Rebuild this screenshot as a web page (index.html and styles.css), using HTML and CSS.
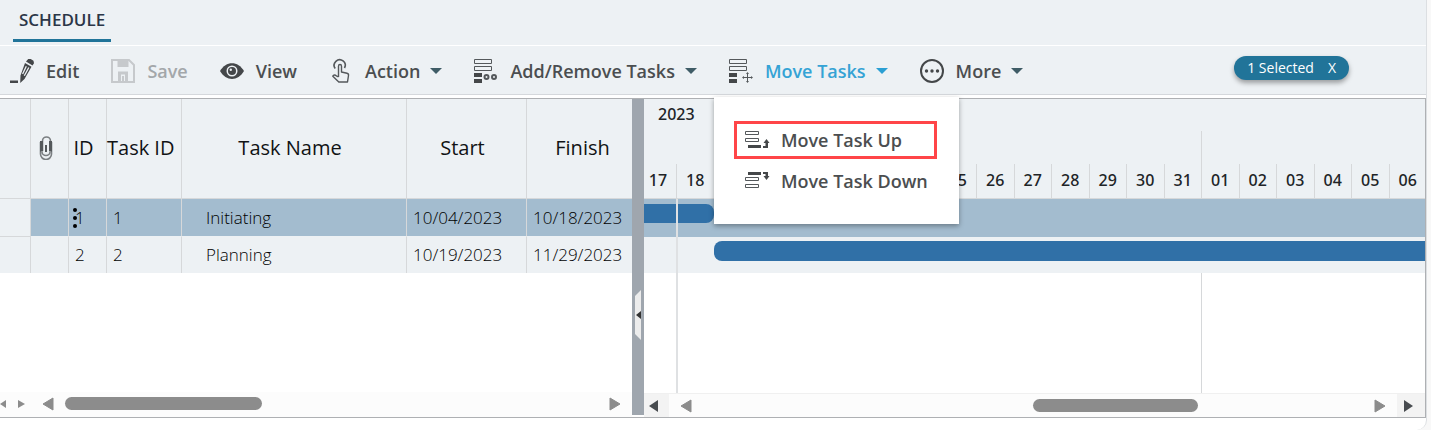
FILE: index.html
```
<!DOCTYPE html>
<html lang="en">
<head>
<meta charset="utf-8">
<title>Schedule</title>
<link rel="stylesheet" href="styles.css">
</head>
<body>
<main class="panel">
  <nav class="tabs"><a class="tab" href="#schedule">SCHEDULE</a></nav>

  <div class="toolbar">
    <button class="tool" type="button">
      <svg class="icon" viewBox="0 0 24 24"><path fill="#444749" d="M0 21.500h8v2.500H0zM16 2.500 18.200 0h2.500l2.800 1.800.5 2.500-1.500 2.200zM15 4l6.500 3.800-7 12.200L10.200 24l.3-7.500z"/><path stroke="#edf1f4" stroke-width="1.300" d="m16.300 7.200-3.700 7.800M18.800 8.500l-4.500 8.300"/></svg>
      <span>Edit</span>
    </button>
    <button class="tool tool-off" type="button" disabled>
      <svg class="icon" viewBox="0 0 24 24" fill="none" stroke="#c6c9cc"><path stroke-width="2" d="M1 1h17l5 5v17H1z"/><path fill="#c6c9cc" stroke="none" d="M6.500 2h11v6h-11z"/><path stroke-width="3" d="M8.500 23v-9h7v9"/><path stroke-width="2" d="M12 17v6"/></svg>
      <span>Save</span>
    </button>
    <button class="tool" type="button">
      <svg class="icon" viewBox="0 0 24 24"><path fill="#444749" d="M0 12C6 1.500 18 1.500 24 12 18 22.500 6 22.500 0 12z"/><circle cx="12" cy="12" r="5.500" fill="#edf1f4"/><circle cx="12" cy="12" r="4" fill="#444749"/><circle cx="10.800" cy="10.800" r="1.200" fill="#edf1f4"/></svg>
      <span>View</span>
    </button>
    <button class="tool" type="button">
      <svg class="icon" viewBox="0 0 24 24" fill="none" stroke="#54585b" stroke-width="1.400"><path d="M6.200 9.500A5.500 5.500 0 1 1 15.500 9" stroke-width="1.600"/><path stroke-linejoin="round" d="M9.500 18V7.200c0-2.200 3-2.200 3 0V13l5.500 1.300c1.300.3 1.700 1 1.500 2.200L18.500 23H9.800l-6-5.800c.8-1.500 2.300-1.400 3.500-.4L9.500 18"/></svg>
      <span>Action</span>
      <svg class="caret" viewBox="0 0 12 6"><path d="M0 0h12L6 6z"/></svg>
    </button>
    <button class="tool" type="button">
      <svg class="icon" viewBox="0 0 24 24" fill="none" stroke="#54585b"><path d="M.5.500h17v4H.5zM.5 7.500h17v4H.5z"/><path fill="#444749" stroke="none" d="M0 14h8v4H0zM0 20h8v4H0z"/><circle cx="12.500" cy="18" r="2" stroke-width="2"/><circle cx="20" cy="18" r="2" stroke-width="2"/></svg>
      <span>Add/Remove Tasks</span>
      <svg class="caret" viewBox="0 0 12 6"><path d="M0 0h12L6 6z"/></svg>
    </button>
    <div class="menu-anchor">
      <button class="tool tool-open" type="button" aria-expanded="true">
        <svg class="icon" viewBox="0 0 24 24" fill="none" stroke="#54585b"><path d="M.5.500h17v4H.5zM.5 7.500h17v4H.5z"/><path fill="#444749" stroke="none" d="M0 14h8v4H0zM0 20h8v4H0z"/><path d="M18.500 14v9M14 18.500h9"/><path fill="#54585b" stroke="none" d="m18.500 13 1.500 2h-3zM18.500 24l1.500-2h-3zM13 18.500l2-1.500v3zM24 18.500l-2-1.500v3z"/></svg>
        <span>Move Tasks</span>
        <svg class="caret" viewBox="0 0 12 6"><path d="M0 0h12L6 6z"/></svg>
      </button>
      <div class="menu">
        <button class="menu-item menu-item-marked" type="button">
          <svg class="icon" viewBox="0 0 24 24" fill="none" stroke="#54585b"><path d="M.5 3.500h13v3H.5zM.5 10.500h13v3H.5z"/><path fill="#444749" stroke="none" d="M3 17h13v3H3zM18 18h2.500v-3H18.500l3-4 3 4H23v5h-5z"/></svg>
          <span>Move Task Up</span>
        </button>
        <button class="menu-item" type="button">
          <svg class="icon" viewBox="0 0 24 24" fill="none" stroke="#54585b"><path d="M.5 8.500h13v3H.5zM.5 15.500h13v3H.5z"/><path fill="#444749" stroke="none" d="M3 3h13v3H3zM18 3h5v4h1.500l-3 4-3-4h2V5H18z"/></svg>
          <span>Move Task Down</span>
        </button>
      </div>
    </div>
    <button class="tool" type="button">
      <svg class="icon" viewBox="0 0 24 24" fill="none" stroke="#444749"><circle cx="12" cy="12" r="11" stroke-width="2"/><g fill="#444749" stroke="none"><circle cx="6.500" cy="12" r="1.700"/><circle cx="12" cy="12" r="1.700"/><circle cx="17.500" cy="12" r="1.700"/></g></svg>
      <span>More</span>
      <svg class="caret" viewBox="0 0 12 6"><path d="M0 0h12L6 6z"/></svg>
    </button>
    <button class="badge" type="button"><span>1 Selected</span><span>X</span></button>
  </div>

  <section class="gantt">
    <div class="grid-pane">
      <table class="grid">
        <colgroup><col class="c-mark"><col class="c-clip"><col class="c-id"><col class="c-task"><col class="c-name"><col class="c-start"><col class="c-end"></colgroup>
        <thead>
          <tr>
            <th></th>
            <th><svg class="clip" viewBox="0 0 14 24" fill="none" stroke="#7b7f82" stroke-width="1.600"><path d="M1.500 6v12a5.500 5.500 0 0 0 11 0V6M3.500 15V5a4 4 0 0 1 8 0"/><path d="M3 16a4 3.500 0 0 0 8 0"/><path stroke="#54585b" stroke-width="3" d="M2.500 5v10.500M11.500 5v10.500"/><path stroke="#54585b" stroke-width="2" d="M7 9v7"/></svg></th>
            <th>ID</th><th>Task ID</th><th>Task Name</th><th>Start</th><th>Finish</th>
          </tr>
        </thead>
        <tbody>
          <tr class="picked"><td></td><td></td><td class="grip-cell">1<svg class="grip" viewBox="0 0 4 20"><circle cx="2" cy="2" r="2"/><circle cx="2" cy="10" r="2"/><circle cx="2" cy="18" r="2"/></svg></td><td>1</td><td class="name">Initiating</td><td>10/04/2023</td><td>10/18/2023</td></tr>
          <tr><td></td><td></td><td>2</td><td>2</td><td class="name">Planning</td><td>10/19/2023</td><td>11/29/2023</td></tr>
        </tbody>
      </table>
      <div class="scroll">
        <div class="scroll-mini"><svg class="mini" viewBox="0 0 7 10"><path d="M6 1v8L0 5z"/></svg><svg class="mini" viewBox="0 0 7 10"><path d="M0 1v8l7-4z"/></svg></div>
        <svg class="arrow" viewBox="0 0 12 14"><path d="M11 1v12L1 7z"/></svg>
        <div class="track"><div class="thumb thumb-left"></div></div>
        <svg class="arrow" viewBox="0 0 12 14"><path d="M1 1v12l10-6z"/></svg>
      </div>
    </div>

    <div class="splitter"><svg class="handle" viewBox="0 0 6 50"><path fill="#ececec" d="M6 0v50L0 44V6z"/><path fill="#333" d="M6 21v8l-5-4z"/></svg></div>

    <div class="chart-pane">
      <div class="chart">
        <div class="scale">
          <div class="year">2023</div>
          <div class="slots weeks"><i class="week"></i></div>
          <div class="slots days">
            <span class="first">17</span><span>18</span><span></span><span></span><span></span><span></span><span></span><span></span><span>25</span><span>26</span><span>27</span><span>28</span><span>29</span><span>30</span><span>31</span><span>01</span><span>02</span><span>03</span><span>04</span><span>05</span><span>06</span>
          </div>
        </div>
        <div class="slots row picked-row"><div class="today"></div><div class="bar bar-a"></div></div>
        <div class="slots row"><div class="today"></div><div class="bar bar-b"></div></div>
        <div class="slots blank"><div class="today"></div><div class="week"></div></div>
      </div>
      <div class="scroll scroll-chart">
        <button class="step" type="button" aria-label="Back"><svg class="arrow-dark" viewBox="0 0 10 12"><path d="M9 0v12L0 6z"/></svg></button>
        <svg class="arrow" viewBox="0 0 12 14"><path d="M11 1v12L1 7z"/></svg>
        <div class="track"><div class="thumb thumb-right"></div></div>
        <svg class="arrow" viewBox="0 0 12 14"><path d="M1 1v12l10-6z"/></svg>
        <button class="step step-end" type="button" aria-label="Forward"><svg class="arrow-dark" viewBox="0 0 10 12"><path d="M0 0v12l9-6z"/></svg></button>
      </div>
    </div>
  </section>
</main>
</body>
</html>
```
FILE: styles.css
```
* { box-sizing: border-box; }
html, body { height: 100%; }
body {
  margin: 0;
  background: #f8f8f8;
  color: #212427;
  font-family: "Open Sans", "Noto Sans", sans-serif;
  overflow: hidden;
}
button { margin: 0; padding: 0; border: 0; background: none; color: inherit; font: inherit; }
svg { display: block; flex: none; }

.panel {
  display: flex;
  flex-direction: column;
  height: 100%;
  margin-right: 4px;
  padding-bottom: 12px;
  background: #fff;
  border-right: 1px solid #dcdfe2;
  border-bottom-right-radius: 10px;
}

/* Tabs */
.tabs {
  display: flex;
  align-items: flex-start;
  height: 46px;
  padding-left: 13px;
  background: #edf1f4;
  border-bottom: 1px solid #fff;
}
.tab {
  height: 42px;
  padding: 0 6px;
  border-bottom: 3px solid #217499;
  color: #2b3647;
  font-size: 17px;
  font-weight: 600;
  line-height: 40px;
  text-decoration: none;
}

/* Toolbar */
.toolbar {
  display: flex;
  align-items: center;
  gap: 32px;
  height: 49px;
  padding: 2px 77px 0 10px;
  background: #edf1f4;
  border-bottom: 1px solid #d5d8dc;
}
.tool {
  display: flex;
  align-items: center;
  height: 46px;
  color: #4b4e50;
  font-size: 18px;
  font-weight: 600;
  white-space: nowrap;
}
.tool-off { color: #a3a7aa; }
.tool-open { color: #35a3d5; }
.icon { width: 24px; height: 24px; margin-right: 12px; overflow: visible; }
.caret { width: 12px; height: 6px; margin-left: 10px; fill: #3f5c66; }
.tool-open .caret { fill: #2b9fd3; }
.badge {
  display: flex;
  gap: 14px;
  margin-left: auto;
  margin-bottom: 6px;
  padding: 0 13px;
  border-radius: 12px;
  background: #217499;
  box-shadow: 0 3px 5px rgba(0, 0, 0, .35);
  color: #fff;
  font-size: 14px;
  line-height: 24px;
}

/* Drop-down menu */
.menu-anchor { position: relative; }
.menu {
  position: absolute;
  top: 49px;
  left: -15px;
  z-index: 2;
  display: flex;
  flex-direction: column;
  gap: 3px;
  width: 245px;
  padding: 24px 20px;
  background: #fff;
  box-shadow: 0 2px 5px rgba(0, 0, 0, .35);
}
.menu-item {
  display: flex;
  align-items: center;
  height: 38px;
  padding-left: 8px;
  border: 3px solid transparent;
  color: #4b4e50;
  font-size: 18px;
  font-weight: 600;
  white-space: nowrap;
}
.menu-item-marked { align-self: stretch; margin-right: 2px; border-color: #ff4548; }

/* Gantt */
.gantt {
  display: flex;
  flex: 1;
  min-height: 0;
  margin-top: 3px;
  border: solid #aeb0b3;
  border-width: 1px 1px 1px 0;
}
.grid-pane { display: flex; flex-direction: column; justify-content: space-between; flex: 0 0 632px; overflow: hidden; }
.grid { width: 647px; table-layout: fixed; border-collapse: separate; border-spacing: 0; }
.c-mark { width: 31px; }
.c-clip, .c-id { width: 38px; }
.c-task { width: 75px; }
.c-name { width: 225px; }
.c-start { width: 120px; }
.grid th {
  height: 100px;
  padding: 0 8px 2px 0;
  background: #edf1f4;
  border-right: 1px solid #d6d8da;
  border-bottom: 1px solid #d6d8da;
  color: #111315;
  font-size: 20px;
  font-weight: 400;
  line-height: 28px;
  white-space: nowrap;
}
.grid td {
  height: 36px;
  padding: 0 6px;
  background: #edf1f4;
  border-right: 1px solid #d6d8da;
  color: #000;
  font-size: 17px;
  font-weight: 300;
  line-height: 24px;
  white-space: nowrap;
}
.grid .picked td { height: 38px; border-bottom: 1px solid #edf1f4; background: #a3bccf; }
.grid .picked td:first-child { background: #edf1f4; border-bottom-color: #d6d8da; }
.grid .name { padding-left: 24px; }
.clip { width: 14px; height: 24px; margin: 0 auto; }
.grip-cell { position: relative; }
.grip { position: absolute; top: 9px; left: 4px; width: 4px; height: 20px; fill: #000; }

.splitter { display: flex; justify-content: flex-end; flex: 0 0 12px; margin-bottom: 2px; padding: 191px 3px 0 0; background: #9fa6ae; }
.handle { width: 6px; height: 50px; }

.chart-pane { display: flex; flex-direction: column; flex: 1; min-width: 0; overflow: hidden; }
.chart { display: flex; flex-direction: column; flex: 1; margin-right: -1px; }
.slots { display: grid; grid-template-columns: 32px repeat(20, minmax(0, 1fr)); }
.scale { height: 100px; background: #edf1f4; border-bottom: 1px solid #d6d8da; font-family: "Noto Sans", "Open Sans", sans-serif; font-weight: 500; }
.year { height: 32px; padding-left: 14px; font-size: 16px; line-height: 30px; }
.weeks { height: 33px; }
.week { grid-column: 16; grid-row: 1; border-left: 1px solid #d6d8da; }
.days { height: 34px; font-size: 16px; line-height: 32px; text-align: center; }
.days span { border-left: 1px solid #d6d8da; }
.days .first { padding-right: 4px; border-left: 0; }
.row { height: 36px; background: #edf1f4; }
.picked-row { height: 38px; background: #a3bccf; }
.today { grid-column: 2; grid-row: 1; z-index: 1; border-left: 2px solid #dfe1e3; }
.bar { grid-row: 1; background: #3070a7; }
.bar-a { grid-column: 1 / 3; height: 19px; margin-top: 5px; border-radius: 0 8px 8px 0; }
.bar-b { grid-column: 3 / -1; height: 20px; margin-top: 4px; border-radius: 8px 0 0 8px; }
.blank { flex: 1; }

/* Scroll bars */
.scroll { display: flex; align-items: center; flex: none; height: 25px; padding: 0 11px 2px 0; background: #fcfcfc; }
.scroll-mini { display: flex; justify-content: space-between; width: 25px; margin-right: 17px; }
.mini { width: 7px; height: 10px; fill: #8c8c8c; }
.arrow { width: 12px; height: 14px; fill: #8c8c8c; stroke: #8c8c8c; stroke-linejoin: round; }
.track { flex: 1; margin: 0 11px; }
.thumb { height: 13px; border-radius: 7px; background: #8c8c8c; }
.thumb-left { width: 37%; }
.thumb-right { width: 25%; margin-left: 50%; }
.scroll-chart { height: 24px; padding: 0; border-top: 1px solid #f0f0f0; }
.step { display: flex; align-items: center; align-self: stretch; width: 25px; margin-right: 11px; padding-left: 5px; background: #f3f3f3; }
.step-end { width: 28px; margin: 0 0 0 11px; padding-left: 7px; }
.arrow-dark { width: 10px; height: 12px; fill: #484c50; }
```
